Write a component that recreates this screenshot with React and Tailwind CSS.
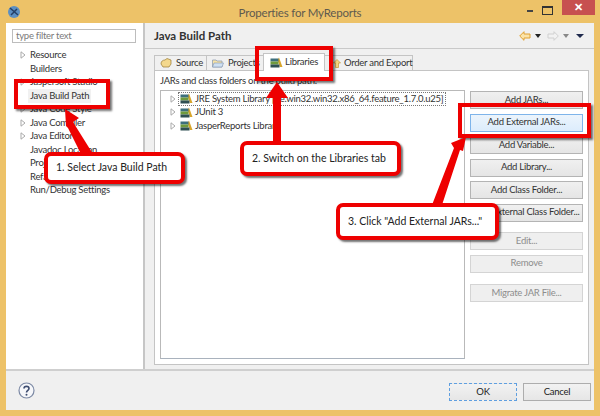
import React from "react";

const treeItems = [
  ["Resource", true],
  ["Builders", false],
  ["Jaspersoft Studio", true],
  ["Java Build Path", false],
  ["Java Code Style", true],
  ["Java Compiler", true],
  ["Java Editor", true],
  ["Javadoc Location", false],
  ["Project References", false],
  ["Refactoring History", false],
  ["Run/Debug Settings", false],
];

const buttons = [
  { label: "Add JARs..." },
  { label: "Add External JARs...", hot: true },
  { label: "Add Variable..." },
  { label: "Add Library..." },
  { label: "Add Class Folder..." },
  { label: "Add External Class Folder..." },
];

function Twisty() {
  return (
    <svg width="6" height="8" viewBox="0 0 6 8" className="shrink-0">
      <path d="M1 .8 5 4 1 7.2Z" fill="#fff" stroke="#a9a9a9" />
    </svg>
  );
}

function BooksIcon({ className }) {
  return (
    <svg width="13" height="11" viewBox="0 0 13 11" className={`shrink-0 ${className || ""}`}>
      <path d="M9 0.5 12.5 10H10L7.5 3Z" fill="#d8a52c" />
      <rect x="0.5" y="1.5" width="8" height="3" fill="#3d6f7c" />
      <rect x="0.5" y="4.5" width="8" height="3" fill="#6f9a3d" />
      <rect x="0.5" y="7.5" width="9" height="3" fill="#2f4f52" />
    </svg>
  );
}

function LibRow({ label, selected }) {
  return (
    <div className="flex h-[13.5px] items-center">
      <Twisty />
      <div
        className={`ml-[2px] flex h-[13.5px] items-center gap-[2px] border pr-[2px] pl-[1px] whitespace-nowrap ${
          selected ? "border-dotted border-[#777]" : "border-transparent"
        }`}
      >
        <BooksIcon />
        <span>{label}</span>
      </div>
    </div>
  );
}

function SideButton({ label, hot, disabled }) {
  return (
    <div
      className={`flex h-[18px] w-[113px] items-center justify-center border whitespace-nowrap ${
        hot
          ? "border-[#7eb4ea] bg-gradient-to-b from-[#ecf4fc] to-[#dcecfc] text-[#333]"
          : disabled
            ? "border-[#d4d4d4] bg-[#efefef] text-[#8d8d8d]"
            : "border-[#b4b4b4] bg-gradient-to-b from-[#f0f0f0] to-[#e5e5e5] text-[#333]"
      }`}
    >
      {label}
    </div>
  );
}

function Callout({ className, children }) {
  return (
    <div
      className={`absolute flex items-center rounded-[7px] border-4 border-[#ee0000] bg-white pl-[8px] text-[10.5px] tracking-normal whitespace-nowrap text-[#222] shadow-[2px_2px_2px_rgba(0,0,0,0.55)] ${className}`}
    >
      {children}
    </div>
  );
}

function Frame({ className }) {
  return (
    <div
      className={`absolute border-4 border-[#ee0000] shadow-[2px_2px_2px_rgba(0,0,0,0.55)] ${className}`}
    />
  );
}

export default function App() {
  return (
    <div className="relative flex h-[416px] w-[600px] flex-col overflow-hidden bg-[#edc268] font-['Lato','Noto_Sans',sans-serif] text-[9.5px] tracking-[-0.25px] text-[#333]">
      {/* title bar */}
      <div className="flex h-[23px] shrink-0 items-start">
        <svg width="14" height="14" viewBox="0 0 14 14" className="mt-[5px] ml-[7px]">
          <circle cx="7" cy="7" r="6" fill="#5c8fc2" />
          <path d="M3 3 11 10M4 10 10 4" stroke="#243f66" strokeWidth="1.5" />
        </svg>
        <div className="mt-[4px] flex-1 pl-[52px] text-center text-[11.5px] tracking-[-0.2px] text-[#5f5a4e]">
          Properties for MyReports
        </div>
        <div className="mt-[6px] mr-[9px] h-[2px] w-[6px] translate-y-[4px] bg-[#444]" />
        <div className="mt-[6px] mr-[9px] h-[9px] w-[11px] border border-t-2 border-[#333]" />
        <div className="mr-[5px] flex h-[15px] w-[33px] items-center justify-center bg-[#c75050] text-[11px] font-bold text-white">
          ✕
        </div>
      </div>

      <div className="mx-[6px] mb-[6px] flex min-h-0 flex-1 flex-col bg-[#f0f0f0]">
        <div className="flex min-h-0 flex-1 border-b-2 border-[#cfcfcf]">
          {/* left tree */}
          <div className="w-[137px] shrink-0 bg-white pt-[6px] pl-[6px]">
            <div className="flex h-[14px] w-[124px] items-center border border-[#bdbdbd] pl-[3px] text-[#7a7a7a]">
              type filter text
            </div>
            <div className="mt-[5.5px] flex flex-col">
              {treeItems.map(([name, hasKids]) => (
                <div key={name} className="flex h-[13.5px] items-center pl-[8px]">
                  <div className="w-[10px]">{hasKids && <Twisty />}</div>
                  <span
                    className={`whitespace-nowrap ${
                      name === "Java Build Path" ? "-ml-[2px] bg-[#f1f1f1] px-[2px]" : ""
                    }`}
                  >
                    {name}
                  </span>
                </div>
              ))}
            </div>
          </div>

          {/* right pane */}
          <div className="flex min-w-0 flex-1 flex-col border-l-2 border-[#c6c6c6]">
            <div className="flex h-[26px] shrink-0 items-center justify-between border-b border-[#c9c9c9] pr-[10px] pl-[9px]">
              <span className="text-[11.5px] font-bold tracking-normal text-[#333]">Java Build Path</span>
              <div className="flex items-center">
                <svg width="12" height="10" viewBox="0 0 12 10">
                  <path d="M.7 5 5 .7V3h6v4H5v2.3Z" fill="#fbe3a8" stroke="#e0a030" />
                </svg>
                <svg width="6" height="4" viewBox="0 0 6 4" className="ml-[4px]">
                  <path d="M0 0H6L3 4Z" fill="#222" />
                </svg>
                <svg width="12" height="10" viewBox="0 0 12 10" className="ml-[6px]">
                  <path d="M11.3 5 7 .7V3H1v4h6v2.3Z" fill="#f2f2f2" stroke="#d0d0d0" />
                </svg>
                <svg width="6" height="4" viewBox="0 0 6 4" className="ml-[4px]">
                  <path d="M0 0H6L3 4Z" fill="#888" />
                </svg>
                <svg width="8" height="4" viewBox="0 0 8 4" className="ml-[7px]">
                  <path d="M0 0H8L4 4Z" fill="#1f2a4d" />
                </svg>
              </div>
            </div>

            {/* tabs */}
            <div className="mt-[5px] flex h-[16px] shrink-0 items-end pl-[9px]">
              <div className="flex h-[15px] w-[53px] items-center gap-[4px] border border-b-0 border-[#c4c4c4] pl-[5px]">
                <svg width="12" height="10" viewBox="0 0 12 10">
                  <path d="M1 6C1 3 3 2 5 2L7 .5 11 2V6L9 9H3Z" fill="#f4d88c" stroke="#9a7a30" strokeWidth=".7" />
                </svg>
                Source
              </div>
              <div className="flex h-[15px] w-[56px] items-center gap-[4px] border-t border-[#c4c4c4] pl-[5px]">
                <svg width="12" height="10" viewBox="0 0 12 10">
                  <path d="M.5 2H4L5 3H10V9H.5Z" fill="#f6e2a6" stroke="#8f9fb5" strokeWidth=".8" />
                  <path d="M2 5H11.5L10 9H.5Z" fill="#cfe0f2" stroke="#7f94b0" strokeWidth=".6" />
                </svg>
                Projects
              </div>
              <div className="z-10 -mb-[1px] flex h-[18px] w-[62px] items-center gap-[2px] border border-b-0 border-[#c4c4c4] bg-white pl-[6px]">
                <BooksIcon />
                Libraries
              </div>
              <div className="flex h-[15px] w-[88px] items-center gap-[3px] border border-b-0 border-l-0 border-[#c4c4c4] pl-[8px]">
                <svg width="8" height="9" viewBox="0 0 8 9" className="shrink-0">
                  <path d="M4 .5 7.5 4H5.5V8.5H2.5V4H.5Z" fill="#f6d77e" stroke="#c69a30" strokeWidth=".7" />
                </svg>
                <span className="whitespace-nowrap">Order and Export</span>
              </div>
            </div>

            {/* tab body */}
            <div className="mr-[5px] mb-[4px] ml-[9px] flex min-h-0 flex-1 flex-col border border-[#c4c4c4] bg-white pt-[3px] pr-[5px] pl-[5px]">
              <div className="h-[14px] leading-[14px] whitespace-nowrap">
                JARs and class folders on the build path:
              </div>
              <div className="mt-[2px] flex min-h-0 flex-1 pb-[5px]">
                <div className="flex w-[305px] shrink-0 flex-col border border-[#b9b9b9] border-b-[#a9b2bd] pt-[1px] pl-[9px]">
                  <LibRow
                    label="JRE System Library [jre.win32.win32.x86_64.feature_1.7.0.u25]"
                    selected
                  />
                  <LibRow label="JUnit 3" />
                  <LibRow label="JasperReports Library" />
                </div>
                <div className="ml-[5px] flex flex-col gap-[4.5px] pt-[1px]">
                  {buttons.map((b) => (
                    <SideButton key={b.label} label={b.label} hot={b.hot} />
                  ))}
                  <div className="mt-[6px]">
                    <SideButton label="Edit..." disabled />
                  </div>
                  <SideButton label="Remove" disabled />
                  <div className="mt-[7px]">
                    <SideButton label="Migrate JAR File..." disabled />
                  </div>
                </div>
              </div>
            </div>
          </div>
        </div>

        {/* footer */}
        <div className="flex h-[39px] shrink-0 items-start justify-between pt-[12px] pr-[3px] pl-[12px]">
          <svg width="17" height="17" viewBox="0 0 17 17" className="-mt-[1px]">
            <circle cx="8.5" cy="8.5" r="7.5" fill="#f6f7fa" stroke="#7d8aa5" strokeWidth="1.2" />
            <path d="M6 6.500C6 3.600 11 3.600 11 6.500 11 8.400 8.500 8.200 8.500 10.500" fill="none" stroke="#3e4d70" strokeWidth="1.6" />
            <circle cx="8.5" cy="12.8" r="1" fill="#3e4d70" />
          </svg>
          <div className="flex gap-[6px] text-[#222]">
            <div className="flex h-[18px] w-[68px] items-center justify-center border border-dashed border-[#5f9fe0] bg-gradient-to-b from-[#f2f2f2] to-[#e6e6e6]">
              OK
            </div>
            <div className="flex h-[18px] w-[68px] items-center justify-center border border-[#adadad] bg-gradient-to-b from-[#f2f2f2] to-[#e6e6e6]">
              Cancel
            </div>
          </div>
        </div>
      </div>

      {/* tutorial annotations drawn over the dialog */}
      <Frame className="top-[79px] left-[14px] h-[30px] w-[96px]" />
      <Frame className="top-[46px] left-[255px] h-[35px] w-[78px]" />
      <Frame className="top-[103px] left-[458px] h-[35px] w-[133px]" />
      <svg width="600" height="416" viewBox="0 0 600 416" className="pointer-events-none absolute top-0 left-0">
        <g fill="#ee0000">
          <path d="M65 109 79 118 73 122 93 154H81L68 128 66 126Z" />
          <path d="M277 82 288 98H281V142H273V98H266Z" />
          <path d="M466 137 463 151 460 150 442 205H432L454 148 451 143Z" />
        </g>
      </svg>
      <Callout className="top-[152px] left-[44px] h-[32px] w-[141px]">1. Select Java Build Path</Callout>
      <Callout className="top-[141px] left-[240px] h-[35px] w-[161px]">2. Switch on the Libraries tab</Callout>
      <Callout className="top-[203px] left-[336px] h-[37px] w-[163px]">3. Click "Add External JARs..."</Callout>
    </div>
  );
}
